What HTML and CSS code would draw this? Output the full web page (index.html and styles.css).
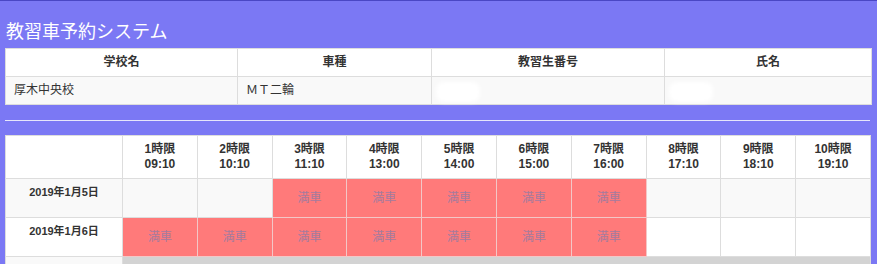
FILE: index.html
```html
<!DOCTYPE html>
<html lang="ja">
<head>
<meta charset="utf-8">
<title>教習車予約システム</title>
<link rel="stylesheet" href="styles.css">
</head>
<body>
<h1 class="title">教習車予約システム</h1>
<table class="info">
  <colgroup><col class="c1"><col class="c2"><col class="c3"><col class="c4"></colgroup>
  <thead>
    <tr><th>学校名</th><th>車種</th><th>教習生番号</th><th>氏名</th></tr>
  </thead>
  <tbody>
    <tr><td>厚木中央校</td><td>ＭＴ二輪</td><td><span class="blur"></span></td><td><span class="blur"></span></td></tr>
  </tbody>
</table>
<hr class="sep">
<table class="sched">
  <colgroup><col class="date-col"><col><col><col><col><col><col><col><col><col><col></colgroup>
  <thead>
    <tr>
      <th></th>
      <th>1時限<br>09:10</th>
      <th>2時限<br>10:10</th>
      <th>3時限<br>11:10</th>
      <th>4時限<br>13:00</th>
      <th>5時限<br>14:00</th>
      <th>6時限<br>15:00</th>
      <th>7時限<br>16:00</th>
      <th>8時限<br>17:10</th>
      <th>9時限<br>18:10</th>
      <th>10時限<br>19:10</th>
    </tr>
  </thead>
  <tbody>
    <tr class="odd">
      <th class="date">2019年1月5日</th>
      <td></td><td></td>
      <td class="full">満車</td><td class="full">満車</td><td class="full">満車</td><td class="full">満車</td><td class="full">満車</td>
      <td></td><td></td><td></td>
    </tr>
    <tr class="even">
      <th class="date">2019年1月6日</th>
      <td class="full">満車</td><td class="full">満車</td><td class="full">満車</td><td class="full">満車</td><td class="full">満車</td><td class="full">満車</td><td class="full">満車</td>
      <td></td><td></td><td></td>
    </tr>
    <tr class="odd">
      <th class="date">&nbsp;</th>
      <td class="closed" colspan="10"></td>
    </tr>
  </tbody>
</table>
</body>
</html>
```

FILE: styles.css
```css
html, body {
  margin: 0;
  padding: 0;
}
body {
  background: #7b78f4;
  border-top: 1px solid #4a47c4;
  padding: 0 6px 0 5px;
  font-family: "Liberation Sans", "Noto Sans CJK JP", sans-serif;
  font-size: 12px;
  color: #333;
}
.title {
  margin: 0;
  padding: 17px 0 0 1px;
  height: 30px;
  line-height: 24px;
  font-size: 18px;
  font-weight: normal;
  color: #fff;
  font-family: "Noto Sans CJK JP", sans-serif;
}
table {
  width: 866px;
  border-collapse: collapse;
  table-layout: fixed;
  background: #fff;
}
th, td {
  border: 1px solid #ddd;
  line-height: 15px;
}
.info .c1 { width: 232px; }
.info .c2 { width: 194px; }
.info .c3 { width: 233px; }
.info .c4 { width: 207px; }
.info th {
  height: 27px;
  padding: 0 8px;
  text-align: center;
  font-weight: bold;
}
.info td {
  height: 27px;
  padding: 0 8px;
  background: #f9f9f9;
  text-align: left;
}
.blur {
  display: inline-block;
  width: 44px;
  height: 20px;
  margin-left: -4px;
  margin-top: 3px;
  background: #fff;
  border-radius: 8px;
  filter: blur(2px);
  vertical-align: middle;
}
.sep {
  margin: 15px 0 14px 0;
  width: 865px;
  border: 0;
  border-top: 1px solid #e6e6fb;
  height: 0;
}
.sched .date-col { width: 117px; }
.sched thead th {
  height: 30px;
  padding: 6px 4px;
  text-align: center;
  font-weight: bold;
  background: #fff;
  vertical-align: middle;
}
.sched tbody tr { height: 39px; }
.sched .odd th, .sched .odd td { background: #f9f9f9; }
.sched .even th, .sched .even td { background: #fff; }
.sched th.date {
  padding: 6px 4px;
  vertical-align: top;
  text-align: center;
  font-weight: bold;
  font-size: 11px;
}
.sched td {
  padding: 0 4px;
  text-align: center;
  vertical-align: middle;
}
.sched td.full {
  background: #ff7a7a;
  color: #a47a9e;
  border-color: #f3c7c7;
}
.sched td.closed {
  background: #d3d3d3;
}
```
